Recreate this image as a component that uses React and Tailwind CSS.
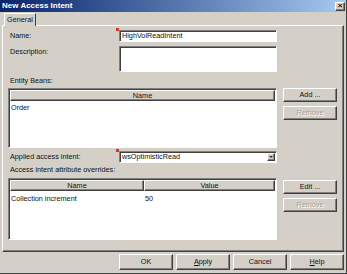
import React from 'react';

const raised =
  'border border-t-white border-l-white border-r-[#404040] border-b-[#404040] shadow-[inset_-1px_-1px_0_#808080]';
const sunken =
  'border border-t-[#808080] border-l-[#808080] border-r-white border-b-white shadow-[inset_1px_1px_0_#404040]';

function Required({ children, className = '' }) {
  return (
    <div className={`relative ${className}`}>
      <span className="absolute -left-[3px] -top-[2px] w-[3px] h-[3px] bg-[#e03030]" />
      {children}
    </div>
  );
}

function Btn({ children, disabled, className = '' }) {
  return (
    <div
      className={`${raised} bg-[#d4d0c8] flex items-center justify-center ${
        disabled ? 'text-[#a0a0a0] [text-shadow:1px_1px_0_#ffffff]' : 'text-[#111]'
      } ${className}`}
    >
      {children}
    </div>
  );
}

function HeaderCell({ children, className = '' }) {
  return (
    <div className={`${raised} bg-[#d4d0c8] h-[11px] flex items-center justify-center ${className}`}>
      {children}
    </div>
  );
}

export default function App() {
  return (
    <div className="w-[347px] h-[274px] bg-[#d4d0c8] flex flex-col font-['Liberation_Sans',Arial,sans-serif] text-[7.25px] leading-none text-[#111] overflow-hidden border-r border-b border-[#404040]">
      {/* Title bar */}
      <div className="h-[12px] shrink-0 flex items-center justify-between pl-[2px] pr-[1px] bg-linear-to-r from-[#0a246a] to-[#a6caf0]">
        <span className="text-white font-bold text-[8px]">New Access Intent</span>
        <div className={`${raised} w-[10px] h-[9px] bg-[#d4d0c8] flex items-center justify-center text-[8px] font-bold`}>
          ×
        </div>
      </div>

      {/* Tabs */}
      <div className="h-[13px] shrink-0 flex items-end pl-[4px] pt-px">
        <div className="relative z-10 -mb-px h-[13px] w-[32px] bg-[#d4d0c8] border-t border-l border-white border-r border-r-[#404040] flex items-center justify-center pb-px">
          General
        </div>
      </div>

      {/* Panel */}
      <div className="h-[227px] shrink-0 mx-[2px] border border-t-white border-l-white border-r-[#404040] border-b-[#404040] shadow-[inset_-1px_-1px_0_#808080] pl-[5px] pr-[6px] flex flex-col">
        {/* Name */}
        <div className="mt-[4px] flex items-center h-[12px]">
          <span className="w-[111px] pl-[2px]">Name:</span>
          <Required className="w-[158px] h-[12px]">
            <div className={`${sunken} bg-white w-full h-full flex items-center pl-[2px]`}>HighVolReadIntent</div>
          </Required>
        </div>

        {/* Description */}
        <div className="mt-[4px] flex h-[26px]">
          <span className="w-[111px] pl-[2px] pt-[2px]">Description:</span>
          <div className={`${sunken} bg-white w-[158px] h-full`} />
        </div>

        <div className="mt-[4px] h-[10px] flex items-center pl-[2px]">Entity Beans:</div>

        {/* Entity beans table */}
        <div className="mt-[2px] flex">
          <div className={`${sunken} bg-white w-[269px] h-[60px] p-px flex flex-col`}>
            <HeaderCell className="w-full">Name</HeaderCell>
            <div className="pl-[1px] pt-[3px]">Order</div>
          </div>
          <div className="ml-[6px] flex flex-col gap-[4px]">
            <Btn className="w-[54px] h-[14px]">Add ...</Btn>
            <Btn className="w-[54px] h-[14px]" disabled>Remove</Btn>
          </div>
        </div>

        {/* Applied access intent */}
        <div className="mt-[3px] flex items-center h-[12px]">
          <span className="w-[111px] pl-[2px]">Applied access intent:</span>
          <Required className="w-[158px] h-[12px]">
            <div className={`${sunken} bg-white w-full h-full flex items-center pl-[2px] pr-px`}>
              <span className="flex-1">wsOptimisticRead</span>
              <div className={`${raised} bg-[#d4d0c8] w-[8px] h-[8px] flex items-center justify-center`}>
                <svg width="4" height="2" viewBox="0 0 4 2">
                  <path d="M0 0h4L2 2z" fill="#333" />
                </svg>
              </div>
            </div>
          </Required>
        </div>

        <div className="mt-[2px] h-[10px] flex items-center pl-[2px]">Access intent attribute overrides:</div>

        {/* Overrides table */}
        <div className="mt-[3px] flex">
          <div className={`${sunken} bg-white w-[269px] h-[62px] p-px flex flex-col`}>
            <div className="flex">
              <HeaderCell className="w-[134px]">Name</HeaderCell>
              <HeaderCell className="flex-1">Value</HeaderCell>
            </div>
            <div className="flex pt-[4px]">
              <span className="w-[134px] pl-[1px]">Collection increment</span>
              <span className="pl-[1px]">50</span>
            </div>
          </div>
          <div className="ml-[6px] mt-[2px] flex flex-col gap-[4px]">
            <Btn className="w-[54px] h-[14px]">Edit ...</Btn>
            <Btn className="w-[54px] h-[14px]" disabled>Remove</Btn>
          </div>
        </div>
      </div>

      {/* Bottom buttons */}
      <div className="flex-1 flex items-center justify-end gap-[3px] pr-[2px] pb-px">
        <Btn className="w-[54px] h-[16px]">OK</Btn>
        <Btn className="w-[54px] h-[16px]">
          <span><span className="underline">A</span>pply</span>
        </Btn>
        <Btn className="w-[54px] h-[16px]">Cancel</Btn>
        <Btn className="w-[54px] h-[16px]">
          <span><span className="underline">H</span>elp</span>
        </Btn>
      </div>
    </div>
  );
}
